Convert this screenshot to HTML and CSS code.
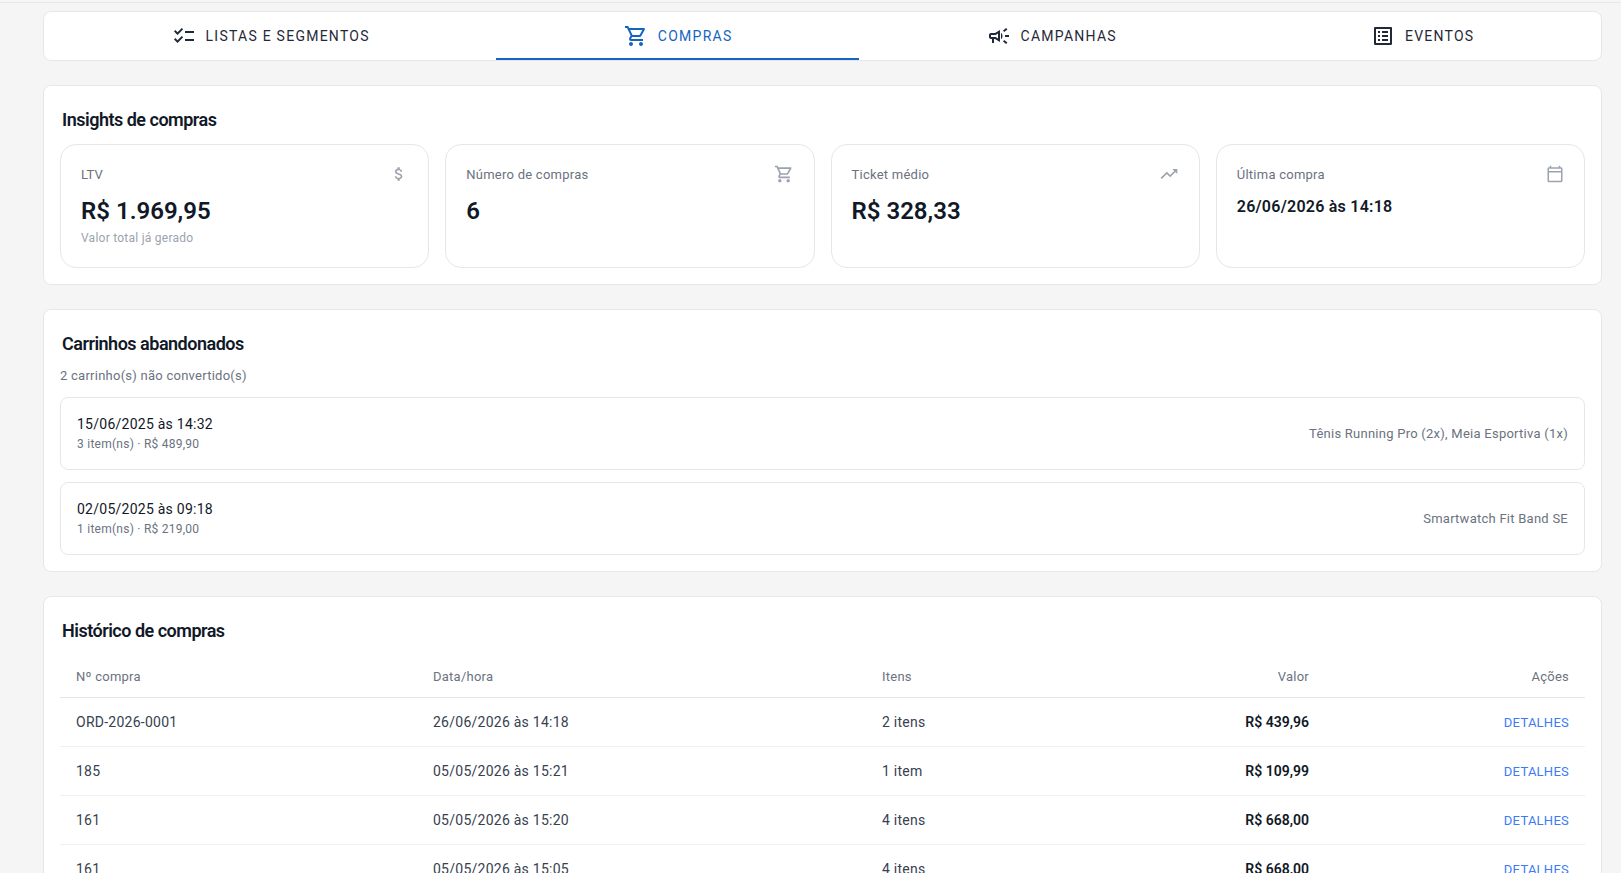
FILE: index.html
```html
<!DOCTYPE html>
<html lang="pt-BR">
<head>
  <meta charset="UTF-8">
  <title>Compras</title>
  <link rel="stylesheet" href="styles.css">
</head>
<body>

<div class="page">
  <nav class="tabs">
    <a class="tab">
      <svg class="tab-icon" viewBox="0 0 24 24"><path d="M22 7h-9v2h9V7zm0 8h-9v2h9v-2zM5.54 11 2 7.46l1.41-1.41 2.12 2.12 4.24-4.24 1.41 1.41L5.54 11zm0 8L2 15.46l1.41-1.41 2.12 2.12 4.24-4.24 1.41 1.41L5.54 19z"/></svg>
      Listas e segmentos
    </a>
    <a class="tab active">
      <svg class="tab-icon" viewBox="0 0 24 24"><path d="M15.55 13c.75 0 1.41-.41 1.75-1.03l3.58-6.49c.37-.66-.11-1.48-.87-1.48H5.21l-.94-2H1v2h2l3.6 7.59-1.35 2.44C4.52 15.37 5.48 17 7 17h12v-2H7l1.1-2h7.45zM6.16 6h12.15l-2.76 5H8.53L6.16 6zM7 18c-1.1 0-1.99.9-1.99 2S5.9 22 7 22s2-.9 2-2-.9-2-2-2zm10 0c-1.1 0-1.99.9-1.99 2s.89 2 1.99 2 2-.9 2-2-.9-2-2-2z"/></svg>
      Compras
    </a>
    <a class="tab">
      <svg class="tab-icon" viewBox="0 0 24 24"><path d="M18 11v2h4v-2h-4zm-2 6.61c.96.71 2.21 1.65 3.2 2.39.4-.53.8-1.07 1.2-1.6-.99-.74-2.24-1.68-3.2-2.4-.4.54-.8 1.08-1.2 1.61zM20.4 5.6c-.4-.53-.8-1.07-1.2-1.6-.99.74-2.24 1.68-3.2 2.4.4.53.8 1.07 1.2 1.6.96-.72 2.21-1.65 3.2-2.4zM4 9c-1.1 0-2 .9-2 2v2c0 1.1.9 2 2 2h1v4h2v-4h1l5 3V6L8 9H4zm5.03 1.71L11 9.53v4.94l-1.97-1.18-.48-.29H4v-2h4.55l.48-.29zM15.5 12c0-1.33-.58-2.53-1.5-3.35v6.69c.92-.81 1.5-2.01 1.5-3.34z"/></svg>
      Campanhas
    </a>
    <a class="tab">
      <svg class="tab-icon" viewBox="0 0 24 24"><path d="M19 5v14H5V5h14m1.1-2H3.9c-.5 0-.9.4-.9.9v16.2c0 .4.4.9.9.9h16.2c.4 0 .9-.5.9-.9V3.9c0-.5-.5-.9-.9-.9zM11 7h6v2h-6V7zm0 4h6v2h-6v-2zm0 4h6v2h-6zM7 7h2v2H7zm0 4h2v2H7zm0 4h2v2H7z"/></svg>
      Eventos
    </a>
  </nav>

  <!-- Insights -->
  <section class="panel">
    <h2 class="panel-title">Insights de compras</h2>
    <div class="stats">
      <div class="stat">
        <div class="stat-head">
          <span class="stat-label">LTV</span>
          <svg class="stat-icon small" viewBox="0 0 24 24"><path d="M11.8 10.9c-2.27-.59-3-1.2-3-2.15 0-1.09 1.01-1.85 2.7-1.85 1.78 0 2.44.85 2.5 2.1h2.21c-.07-1.72-1.12-3.3-3.21-3.81V3h-3v2.16c-1.94.42-3.5 1.68-3.5 3.61 0 2.31 1.91 3.46 4.7 4.13 2.5.6 3 1.48 3 2.41 0 .69-.49 1.79-2.7 1.79-2.06 0-2.87-.92-2.98-2.1h-2.2c.12 2.19 1.76 3.42 3.68 3.83V21h3v-2.15c1.95-.37 3.5-1.5 3.5-3.55 0-2.84-2.43-3.81-4.7-4.4z"/></svg>
        </div>
        <div class="stat-value">R$ 1.969,95</div>
        <div class="stat-hint">Valor total já gerado</div>
      </div>
      <div class="stat">
        <div class="stat-head">
          <span class="stat-label">Número de compras</span>
          <svg class="stat-icon" viewBox="0 0 24 24"><path d="M15.55 13c.75 0 1.41-.41 1.75-1.03l3.58-6.49c.37-.66-.11-1.48-.87-1.48H5.21l-.94-2H1v2h2l3.6 7.59-1.35 2.44C4.52 15.37 5.48 17 7 17h12v-2H7l1.1-2h7.45zM6.16 6h12.15l-2.76 5H8.53L6.16 6zM7 18c-1.1 0-1.99.9-1.99 2S5.9 22 7 22s2-.9 2-2-.9-2-2-2zm10 0c-1.1 0-1.99.9-1.99 2s.89 2 1.99 2 2-.9 2-2-.9-2-2-2z"/></svg>
        </div>
        <div class="stat-value">6</div>
      </div>
      <div class="stat">
        <div class="stat-head">
          <span class="stat-label">Ticket médio</span>
          <svg class="stat-icon" viewBox="0 0 24 24"><path d="m16 6 2.29 2.29-4.88 4.88-4-4L2 16.59 3.41 18l6-6 4 4 6.3-6.29L22 12V6z"/></svg>
        </div>
        <div class="stat-value">R$ 328,33</div>
      </div>
      <div class="stat">
        <div class="stat-head">
          <span class="stat-label">Última compra</span>
          <svg class="stat-icon small" viewBox="0 0 24 24"><path d="M20 3h-1V1h-2v2H7V1H5v2H4c-1.1 0-2 .9-2 2v16c0 1.1.9 2 2 2h16c1.1 0 2-.9 2-2V5c0-1.1-.9-2-2-2zm0 2v3H4V5h16zM4 21V10h16v11H4z"/></svg>
        </div>
        <div class="stat-date">26/06/2026 às 14:18</div>
      </div>
    </div>
  </section>

  <!-- Carrinhos -->
  <section class="panel">
    <h2 class="panel-title">Carrinhos abandonados</h2>
    <p class="panel-sub">2 carrinho(s) não convertido(s)</p>
    <div class="cart">
      <div>
        <div class="cart-date">15/06/2025 às 14:32</div>
        <div class="cart-meta">3 item(ns) · R$ 489,90</div>
      </div>
      <div class="cart-items">Tênis Running Pro (2x), Meia Esportiva (1x)</div>
    </div>
    <div class="cart">
      <div>
        <div class="cart-date">02/05/2025 às 09:18</div>
        <div class="cart-meta">1 item(ns) · R$ 219,00</div>
      </div>
      <div class="cart-items">Smartwatch Fit Band SE</div>
    </div>
  </section>

  <!-- Historico -->
  <section class="panel">
    <h2 class="panel-title">Histórico de compras</h2>
    <table class="orders">
      <thead>
        <tr>
          <th class="col-num">Nº compra</th>
          <th class="col-date">Data/hora</th>
          <th class="col-items">Itens</th>
          <th class="col-value right">Valor</th>
          <th class="right">Ações</th>
        </tr>
      </thead>
      <tbody>
        <tr>
          <td>ORD-2026-0001</td>
          <td>26/06/2026 às 14:18</td>
          <td>2 itens</td>
          <td class="right price">R$ 439,96</td>
          <td class="right"><a class="link">Detalhes</a></td>
        </tr>
        <tr>
          <td>185</td>
          <td>05/05/2026 às 15:21</td>
          <td>1 item</td>
          <td class="right price">R$ 109,99</td>
          <td class="right"><a class="link">Detalhes</a></td>
        </tr>
        <tr>
          <td>161</td>
          <td>05/05/2026 às 15:20</td>
          <td>4 itens</td>
          <td class="right price">R$ 668,00</td>
          <td class="right"><a class="link">Detalhes</a></td>
        </tr>
        <tr>
          <td>161</td>
          <td>05/05/2026 às 15:05</td>
          <td>4 itens</td>
          <td class="right price">R$ 668,00</td>
          <td class="right"><a class="link">Detalhes</a></td>
        </tr>
      </tbody>
    </table>
  </section>
</div>

</body>
</html>
```

FILE: styles.css
```css
html, body {
  height: 100%;
  overflow: hidden;
}

body {
  margin: 0;
  background: #f5f5f5;
  font-family: "Roboto", "Liberation Sans", sans-serif;
  letter-spacing: 0.25px;
  color: #111827;
}

.page {
  box-sizing: border-box;
  height: 100%;
  margin-top: 2px;
  border-top: 1px solid #e5e7eb;
  padding: 8px 19px 0 43px;
  display: flex;
  flex-direction: column;
  gap: 24px;
}

/* Tabs */
.tabs {
  display: flex;
  flex: none;
  height: 50px;
  box-sizing: border-box;
  background: #fff;
  border: 1px solid #e5e7eb;
  border-radius: 8px;
  overflow: hidden;
}

.tab {
  flex: 1 1 auto;
  display: flex;
  align-items: center;
  justify-content: center;
  gap: 9.5px;
  padding-left: 1.5px;
  font-size: 14px;
  letter-spacing: 1.25px;
  text-transform: uppercase;
  color: #1f2937;
}

.tab-icon {
  width: 24px;
  height: 24px;
  fill: #1f2937;
}

.tab.active {
  color: #1565c0;
  box-shadow: inset 0 -2px 0 #1565c0;
}

.tab.active .tab-icon {
  fill: #1565c0;
}

/* Panels */
.panel {
  flex: none;
  background: #fff;
  border: 1px solid #e5e7eb;
  border-radius: 8px;
  padding: 16px;
}

.panel-title {
  margin: 4px 0 8px 2px;
  font-size: 18px;
  font-weight: 600;
  line-height: 28px;
  letter-spacing: -0.5px;
}

.panel-sub {
  margin: 0 0 11px;
  font-size: 13px;
  line-height: 20px;
  color: #6b7280;
}

/* Stat cards */
.stats {
  display: grid;
  grid-template-columns: repeat(4, 1fr);
  gap: 16px;
  margin-top: 10px;
}

.stat {
  height: 124px;
  box-sizing: border-box;
  border: 1px solid #e5e7eb;
  border-radius: 16px;
  padding: 19px 20px;
}

.stat-head {
  display: flex;
  justify-content: space-between;
  align-items: center;
  height: 20px;
}

.stat-label {
  font-size: 13px;
  color: #6b7280;
}

.stat-icon {
  width: 20px;
  height: 20px;
  fill: #9ca3af;
}

.stat-icon.small {
  width: 18px;
  height: 18px;
}

.stat-value {
  margin-top: 11px;
  font-size: 24px;
  font-weight: 600;
  line-height: 32px;
  letter-spacing: 0;
}

.stat-hint {
  margin-top: 3px;
  font-size: 12px;
  line-height: 16px;
  color: #9ca3af;
}

.stat-date {
  margin-top: 11px;
  font-size: 16px;
  font-weight: 600;
  line-height: 24px;
}

/* Carts */
.cart {
  display: flex;
  justify-content: space-between;
  align-items: center;
  height: 73px;
  box-sizing: border-box;
  border: 1px solid #e5e7eb;
  border-radius: 8px;
  padding: 0 16px;
  margin-bottom: 12px;
}

.cart:last-child {
  margin-bottom: 0;
}

.cart-date {
  font-size: 14px;
  line-height: 20px;
}

.cart-meta {
  font-size: 12px;
  line-height: 20px;
  color: #6b7280;
}

.cart-items {
  font-size: 13px;
  color: #6b7280;
}

/* Orders table */
.orders {
  width: 100%;
  table-layout: fixed;
  border-collapse: collapse;
  margin-top: 10px;
}

.orders th,
.orders td {
  padding: 0 16px;
  height: 48px;
  text-align: left;
  font-size: 14px;
  border-bottom: 1px solid #f0f0f0;
}

.orders td {
  color: #374151;
}

.orders th {
  height: 42px;
  font-size: 13px;
  font-weight: 400;
  color: #6b7280;
  border-bottom-color: #e5e7eb;
}

.orders .right {
  text-align: right;
}

.col-num {
  width: 325px;
}

.col-date {
  width: 417px;
}

.col-items {
  width: 198px;
}

.col-value {
  width: 197px;
}

.orders .price {
  font-weight: 600;
  letter-spacing: 0;
  color: #111827;
}

.link {
  font-size: 13px;
  text-transform: uppercase;
  color: #3b7cf6;
}
```
